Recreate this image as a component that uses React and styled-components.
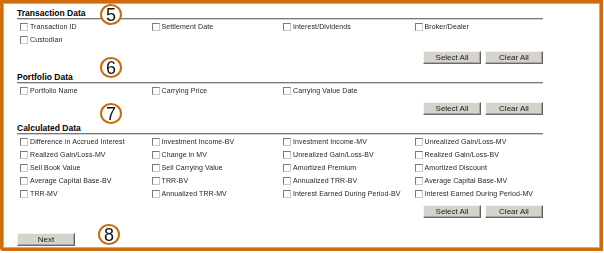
import styled, { createGlobalStyle } from "styled-components"

const GlobalStyle = createGlobalStyle`
    html, body {
        margin: 0;
        padding: 0;
        background: #ffffff;
    }
    body {
        font-family: "Liberation Sans", Arial, sans-serif;
        -webkit-font-smoothing: antialiased;
    }
`

const sections = [
    {
        title: 'Transaction Data',
        items: ['Transaction ID', 'Settlement Date', 'Interest/Dividends', 'Broker/Dealer', 'Custodian']
    },
    {
        title: 'Portfolio Data',
        items: ['Portfolio Name', 'Carrying Price', 'Carrying Value Date']
    },
    {
        title: 'Calculated Data',
        items: [
            'Difference in Accrued Interest', 'Investment Income-BV', 'Investment Income-MV', 'Unrealized Gain/Loss-MV',
            'Realized Gain/Loss-MV', 'Change in MV', 'Unrealized Gain/Loss-BV', 'Realized Gain/Loss-BV',
            'Sell Book Value', 'Sell Carrying Value', 'Amortized Premium', 'Amortized Discount',
            'Average Capital Base-BV', 'TRR-BV', 'Annualized TRR-BV', 'Average Capital Base-MV',
            'TRR-MV', 'Annualized TRR-MV', 'Interest Earned During Period-BV', 'Interest Earned During Period-MV'
        ]
    }
]

// numeros de anotacao por cima do formulario
const markers = [
    { n: 5, left: 100, top: 4 },
    { n: 6, left: 100, top: 57 },
    { n: 7, left: 100, top: 103 },
    { n: 8, left: 98, top: 224 }
]

const App = () => {
    return (
        <>
            <GlobalStyle />
            <Frame>
                {sections.map((secao) => (
                    <Section key={secao.title}>
                        <Heading>{secao.title}</Heading>
                        <Grid>
                            {secao.items.map((item) => (
                                <Option key={item}>
                                    <Box type="checkbox" />
                                    <span>{item}</span>
                                </Option>
                            ))}
                        </Grid>
                        <ButtonRow>
                            <Button type="button">Select All</Button>
                            <Button type="button">Clear All</Button>
                        </ButtonRow>
                    </Section>
                ))}
                <Footer>
                    <Button type="button">Next</Button>
                </Footer>

                {markers.map((m) => (
                    <Marker key={m.n} $left={m.left} $top={m.top}>{m.n}</Marker>
                ))}
            </Frame>
        </>
    )
}

const Frame = styled.div`
    position: relative;
    box-sizing: border-box;
    width: 603px;
    height: 251px;
    border: 3px solid #cf6c0c;
    border-radius: 0 0 0 3px;
    box-shadow: inset 0 0 0 1px #e6a262;
    padding: 4px 0 0 14px;
    display: flex;
    flex-direction: column;
`

const Section = styled.div`
    display: flex;
    flex-direction: column;
    width: 526px;
    margin-bottom: 7px;

    &:nth-of-type(3) {
        margin-bottom: 0;
    }
`

const Heading = styled.h2`
    margin: 0;
    height: 11px;
    line-height: 12px;
    font-size: 8.5px;
    font-weight: bold;
    color: #000000;
    border-bottom: 1px solid #777777;
    box-shadow: 0 1px 0 #d0d0d0;
`

const Grid = styled.div`
    display: grid;
    grid-template-columns: repeat(4, 131.5px);
    grid-auto-rows: 13px;
    margin: 1px 0 0 3px;
    will-change: transform;
`

const Option = styled.label`
    display: flex;
    align-items: center;
    gap: 2px;
    font-size: 7px;
    letter-spacing: 0.1px;
    color: #1e1e1e;
    white-space: nowrap;
`

const Box = styled.input`
    appearance: none;
    margin: 0;
    width: 8px;
    height: 8px;
    box-sizing: border-box;
    background: #ffffff;
    border: 1px solid;
    border-color: #7a7a7a #c8c8c8 #c8c8c8 #7a7a7a;
`

const ButtonRow = styled.div`
    display: flex;
    justify-content: flex-end;
    gap: 4px;
    margin-top: 5px;
    will-change: transform;
`

const Button = styled.button`
    box-sizing: border-box;
    width: 58px;
    height: 13px;
    padding: 0;
    font-family: "Liberation Sans", Arial, sans-serif;
    font-size: 8px;
    line-height: 11px;
    color: #1a1a1a;
    background: #d6d3cc;
    border: 1px solid;
    border-color: #f4f4f4 #5e5e5e #6a6a6a #f4f4f4;
    box-shadow: inset -1px -1px 0 #a8a6a0;
`

const Footer = styled.div`
    display: flex;
    margin-top: 15px;
    will-change: transform;
`

const Marker = styled.div`
    position: absolute;
    left: ${(p) => p.$left - 3}px;
    top: ${(p) => p.$top - 3}px;
    box-sizing: border-box;
    width: 22px;
    height: 21px;
    border: 2px solid #cc6a0c;
    border-radius: 50%;
    background: #ffffff;
    display: flex;
    align-items: center;
    justify-content: center;
    font-family: "Liberation Sans", Arial, sans-serif;
    font-size: 18px;
    line-height: 1;
    color: #111111;
`

export default App
